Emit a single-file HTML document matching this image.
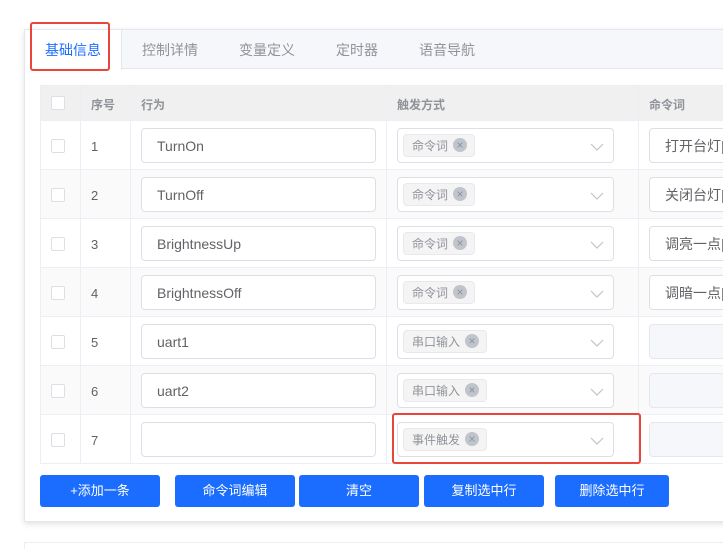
<!DOCTYPE html>
<html><head><meta charset="utf-8"><style>
*{box-sizing:border-box;margin:0;padding:0}
html,body{width:723px;height:549px;overflow:hidden}
body{background:#fff;font-family:"Liberation Sans","Noto Sans CJK SC",sans-serif;position:relative}
.abs{position:absolute}
.card{left:24px;top:29px;width:720px;height:493px;background:#fff;border:1px solid #e4e7ed;box-shadow:0 2px 6px rgba(0,0,0,.12)}
.tabs{left:25px;top:30px;width:700px;height:39px;background:#f5f7fa;border-bottom:1px solid #e4e7ed}
.tab{top:31px;height:39px;line-height:39px;font-size:14px;color:#909399}
.cell{border-right:1px solid #ebeef5;border-bottom:1px solid #ebeef5}
.inp{height:35px;border:1px solid #dcdfe6;border-radius:4px;background:#fff;font-size:14px;color:#606266;line-height:34px;padding-left:15px;white-space:nowrap;overflow:hidden}
.cb{width:14px;height:14px;border:1px solid #dcdfe6;border-radius:2px;background:#fff}
.tag{height:23px;border:1px solid #e9e9eb;background:#f4f4f5;border-radius:4px;font-size:12px;color:#909399;line-height:22px;padding-left:8px}
.x{position:absolute;top:3px;width:14px;height:14px;border-radius:50%;background:#c0c4cc;color:#909399;font-size:12px;line-height:14px;text-align:center}
.btn{top:475px;height:32px;background:#1a6dff;color:#fff;border-radius:3px;font-size:13px;text-align:center;line-height:32px}
.red{border:2px solid #e8463a;border-radius:3px}
</style></head><body>
<div class="abs card"></div>
<div class="abs tabs"></div>
<div class="abs" style="left:25px;top:30px;width:97px;height:40px;background:#fff;border-right:1px solid #e4e7ed"></div>
<div class="abs tab" style="left:45px;color:#1a6dff">基础信息</div>
<div class="abs tab" style="left:142px">控制详情</div>
<div class="abs tab" style="left:239px">变量定义</div>
<div class="abs tab" style="left:336px">定时器</div>
<div class="abs tab" style="left:419px">语音导航</div>
<div class="abs red" style="left:30px;top:22px;width:80px;height:49px"></div>

<div class="abs" style="left:40px;top:85px;width:690px;height:36px;background:#f0f0f0;border-top:1px solid #ebeef5"></div>
<div class="abs cell" style="left:40px;top:85px;width:41px;height:36px;border-left:1px solid #ebeef5"></div>
<div class="abs cell" style="left:80px;top:85px;width:51px;height:36px"></div>
<div class="abs cell" style="left:130px;top:85px;width:257px;height:36px"></div>
<div class="abs cell" style="left:386px;top:85px;width:253px;height:36px"></div>
<div class="abs cb" style="left:51px;top:96px"></div>
<div class="abs" style="left:91px;top:96px;font-size:12px;font-weight:bold;color:#909399">序号</div>
<div class="abs" style="left:141px;top:96px;font-size:12px;font-weight:bold;color:#909399">行为</div>
<div class="abs" style="left:397px;top:96px;font-size:12px;font-weight:bold;color:#909399">触发方式</div>
<div class="abs" style="left:649px;top:96px;font-size:12px;font-weight:bold;color:#909399">命令词</div>

<div id="rows"></div>
<script>
var d=[["1","TurnOn","命令词","打开台灯|"],["2","TurnOff","命令词","关闭台灯|"],["3","BrightnessUp","命令词","调亮一点|"],["4","BrightnessOff","命令词","调暗一点|"],["5","uart1","串口输入",""],["6","uart2","串口输入",""],["7","","事件触发",""]];
var h="";
d.forEach(function(r,i){var y=121+i*49;var bg=(i%2==1)?"#fafafa":"#fff";
h+='<div class="abs" style="left:40px;top:'+y+'px;width:690px;height:49px;background:'+bg+';border-bottom:1px solid #ebeef5"></div>';
h+='<div class="abs cell" style="left:40px;top:'+y+'px;width:41px;height:49px;border-left:1px solid #ebeef5"></div>';
h+='<div class="abs cell" style="left:80px;top:'+y+'px;width:51px;height:49px"></div>';
h+='<div class="abs cell" style="left:130px;top:'+y+'px;width:257px;height:49px"></div>';
h+='<div class="abs cell" style="left:386px;top:'+y+'px;width:253px;height:49px"></div>';
h+='<div class="abs cb" style="left:51px;top:'+(y+18)+'px"></div>';
h+='<div class="abs" style="left:91px;top:'+(y+18)+'px;font-size:13px;color:#606266">'+r[0]+'</div>';
h+='<div class="abs inp" style="left:141px;top:'+(y+7)+'px;width:235px">'+r[1]+'</div>';
h+='<div class="abs inp" style="left:397px;top:'+(y+7)+'px;width:217px"></div>';
var tw=r[2].length*12+36;
h+='<div class="abs tag" style="left:403px;top:'+(y+13)+'px;width:'+tw+'px">'+r[2]+'<span class="x" style="left:'+(tw-23)+'px">×</span></div>';
h+='<svg class="abs" style="left:590px;top:'+(y+21)+'px" width="14" height="10"><path d="M1 2 L7 8 L13 2" fill="none" stroke="#c0c4cc" stroke-width="1.2"/></svg>';
var dis=r[3]==""?"background:#f5f7fa;border-color:#e4e7ed;":"";
h+='<div class="abs inp" style="left:649px;top:'+(y+7)+'px;width:90px;'+dis+'">'+r[3]+'</div>';
});
document.getElementById("rows").innerHTML=h;
</script>
<div class="abs red" style="left:392px;top:413px;width:249px;height:51px"></div>

<div class="abs btn" style="left:40px;width:120px">+添加一条</div>
<div class="abs btn" style="left:175px;width:120px">命令词编辑</div>
<div class="abs btn" style="left:299px;width:120px">清空</div>
<div class="abs btn" style="left:424px;width:120px">复制选中行</div>
<div class="abs btn" style="left:555px;width:114px">删除选中行</div>

<div class="abs" style="left:24px;top:542px;width:699px;height:7px;background:#fff;border-top:1px solid #eee;border-left:1px solid #eee"></div>
</body></html>
